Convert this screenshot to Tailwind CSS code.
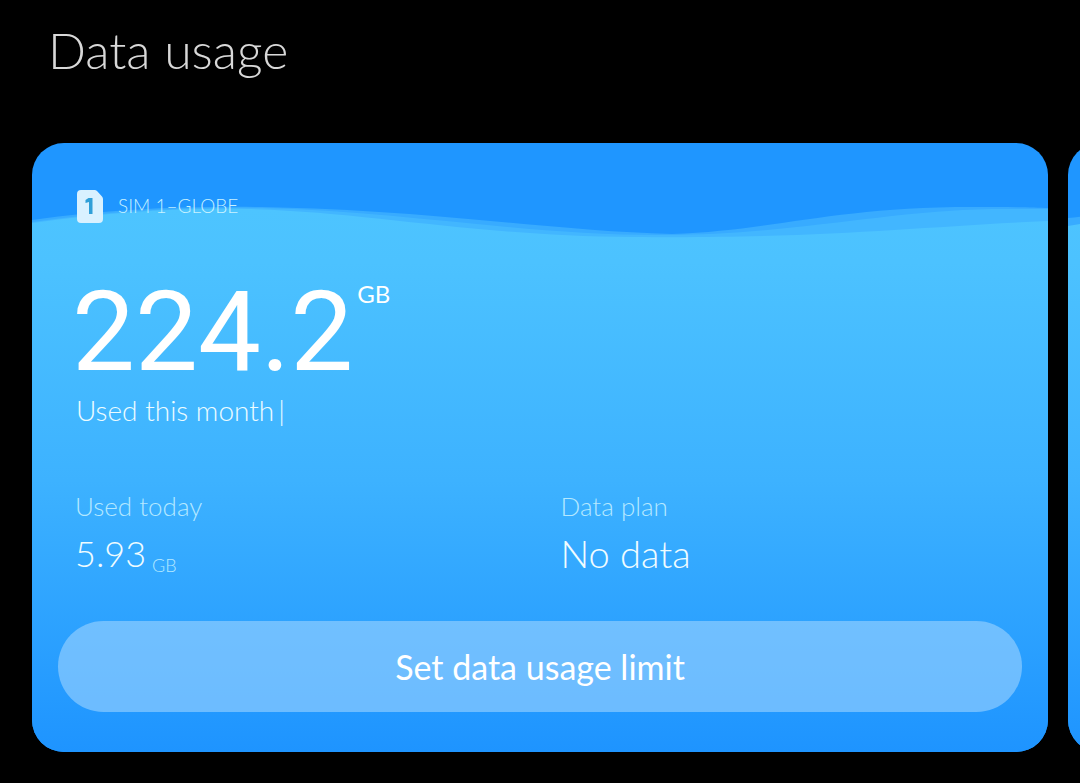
<!DOCTYPE html>
<html lang="en">
<head>
  <meta charset="UTF-8">
  <meta name="viewport" content="width=device-width, initial-scale=1">
  <title>Data usage</title>
  <script src="https://cdn.jsdelivr.net/npm/@tailwindcss/browser@4"></script>
</head>
<body class="bg-black text-white min-h-screen overflow-x-hidden font-['Lato','Open_Sans',sans-serif]">

  <h1 class="pt-5 pl-12 text-[50px] leading-[60px] font-light text-[#d8d8d8]">Data usage</h1>

  <main class="mt-[63px] px-8 flex gap-5 overflow-hidden">

    <!-- SIM 1 -->
    <section class="relative w-full shrink-0 rounded-[32px] overflow-hidden bg-[#1f96ff] px-[26px] pt-[46px] pb-10">
      <svg class="absolute inset-0 w-full h-full" viewBox="0 0 1016 609" preserveAspectRatio="none" aria-hidden="true">
        <defs>
          <linearGradient id="water" gradientUnits="userSpaceOnUse" x1="0" y1="65" x2="0" y2="609">
            <stop offset="0" stop-color="#4dc4ff"/>
            <stop offset="0.1" stop-color="#4cc2ff"/>
            <stop offset="0.5" stop-color="#3db2ff"/>
            <stop offset="1" stop-color="#1e94ff"/>
          </linearGradient>
        </defs>
        <path fill="#38abff" d="M0 77C80 66 150 63 230 64C400 67 520 88 640 91C740 88 800 64 940 64C970 64 1000 64 1016 65V200H0Z"/>
        <path fill="#42b6ff" d="M0 79C80 68 150 64 230 65C370 68 490 92 630 92C760 92 850 68 960 66L1016 66V200H0Z"/>
        <path fill="url(#water)" d="M0 80C80 69 150 65 215 66C340 69 440 93 600 94C790 96 880 84 1016 78V609H0Z"/>
      </svg>

      <div class="relative">
        <div class="pl-[19px] flex items-center gap-[15px]">
          <svg class="w-[26px] h-[34px]" viewBox="0 0 26 34" aria-hidden="true">
            <path fill="#d9f1ff" d="M4 1H17.500Q19 1 20 2L25 7.500Q26 8.500 26 10V30Q26 34 22 34H4Q0 34 0 30V5Q0 1 4 1Z"/>
            <path fill="#2f9fd8" d="M11.500 9H15.500V25H12V13L8.500 14V11Z"/>
          </svg>
          <span class="text-[19px] leading-6 font-light text-[#c8f2ff]">SIM 1–GLOBE</span>
        </div>

        <div class="pl-[14px] mt-[49px] flex items-start gap-1">
          <span class="font-['Roboto',sans-serif] text-[112px] leading-[120px] font-normal">224.2</span>
          <span class="mt-1.5 text-[24px] leading-8 font-normal">GB</span>
        </div>
        <p class="pl-[18px] flex gap-1 text-[28px] leading-9 font-light text-[#ecfcff]"><span>Used this month</span><span>|</span></p>

        <dl class="pl-[17px] mt-[62px] grid grid-cols-2 gap-x-6">
          <div>
            <dt class="text-[26px] leading-8 font-light text-[#b4e8ff]">Used today</dt>
            <dd class="mt-[7px] flex items-end gap-1.5 text-[36px] leading-12 font-light text-[#f0fcff]">5.93 <span class="text-[18px] leading-6 text-[#b4e8ff]">GB</span></dd>
          </div>
          <div>
            <dt class="text-[26px] leading-8 font-light text-[#b4e8ff]">Data plan</dt>
            <dd class="mt-[7px] text-[38px] leading-12 font-light text-[#f0fcff]">No data</dd>
          </div>
        </dl>

        <button type="button" class="mt-11 w-full rounded-full bg-[#9ed3ff]/60 py-5 text-[34px] leading-[51px] font-normal">Set data usage limit</button>
      </div>
    </section>

    <!-- next SIM, peeking in from the right -->
    <section class="relative w-full shrink-0 rounded-[32px] overflow-hidden bg-[#1f96ff]" aria-label="SIM 2">
      <svg class="absolute inset-0 w-full h-full" viewBox="0 0 1016 609" preserveAspectRatio="none" aria-hidden="true">
        <path fill="#38abff" d="M0 75C80 66 150 63 230 64H1016V200H0Z"/>
        <path fill="url(#water)" d="M0 83C80 69 150 65 215 66H1016V609H0Z"/>
      </svg>
    </section>

  </main>

</body>
</html>
